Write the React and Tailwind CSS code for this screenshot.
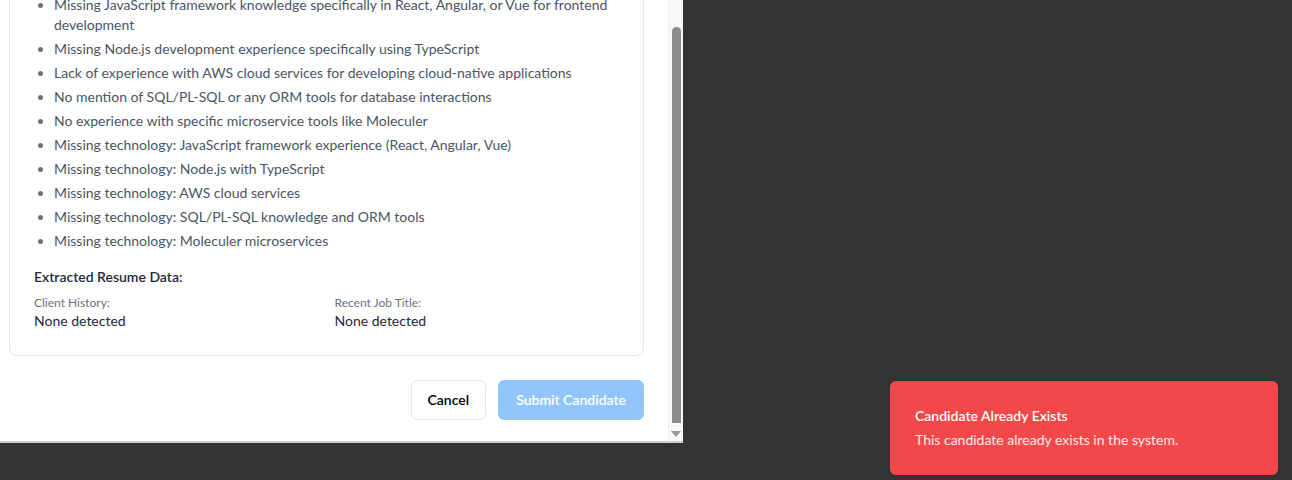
import React from 'react'

const gaps = [
  'Missing JavaScript framework knowledge specifically in React, Angular, or Vue for frontend development',
  'Missing Node.js development experience specifically using TypeScript',
  'Lack of experience with AWS cloud services for developing cloud-native applications',
  'No mention of SQL/PL-SQL or any ORM tools for database interactions',
  'No experience with specific microservice tools like Moleculer',
  'Missing technology: JavaScript framework experience (React, Angular, Vue)',
  'Missing technology: Node.js with TypeScript',
  'Missing technology: AWS cloud services',
  'Missing technology: SQL/PL-SQL knowledge and ORM tools',
  'Missing technology: Moleculer microservices',
]

const Scrollbar = () => (
  <div className="w-[15px] h-full bg-[#f8f8f8] border-l border-[#ededed] flex flex-col items-center">
    <div className="mt-[27px] w-[9px] h-[396px] rounded-t-full rounded-b-[3px] bg-[#8c8c8c]" />
    <div className="mt-[8px] w-0 h-0 border-l-[5px] border-r-[5px] border-t-[6px] border-l-transparent border-r-transparent border-t-[#9a9a9a]" />
  </div>
)

export default function App() {
  return (
    <div
      className="relative w-[1292px] h-[480px] overflow-hidden bg-[#333333]"
      style={{ fontFamily: 'Lato, "Open Sans", sans-serif' }}
    >
      {/* modal, scrolled to the bottom */}
      <div className="w-[683px] h-[443px] bg-white border-b-2 border-[#cfcfcf] flex">
        <div className="flex-1 overflow-hidden pl-[9px] pr-[24px]">
          <div className="-mt-[30px] border border-gray-200 rounded-lg px-6 pt-6 pb-6">
            <ul className="list-disc list-outside pl-5 space-y-1 text-sm leading-5 text-gray-600 marker:text-gray-500">
              {gaps.map((g) => (
                <li key={g}>{g}</li>
              ))}
            </ul>

            <h4 className="mt-4 text-sm leading-5 font-semibold text-gray-800">Extracted Resume Data:</h4>
            <div className="mt-2 grid grid-cols-2 gap-4">
              <div>
                <p className="text-xs leading-4 text-gray-500">Client History:</p>
                <p className="text-sm leading-5 text-gray-800">None detected</p>
              </div>
              <div>
                <p className="text-xs leading-4 text-gray-500">Recent Job Title:</p>
                <p className="text-sm leading-5 text-gray-800">None detected</p>
              </div>
            </div>
          </div>

          <div className="mt-6 flex justify-end gap-3">
            <button className="h-10 px-4 rounded-md border border-gray-200 bg-white text-sm font-semibold text-black">
              Cancel
            </button>
            <button className="h-10 px-[18px] rounded-md bg-[#93c5fd] text-sm font-semibold text-white">
              Submit Candidate
            </button>
          </div>
        </div>
        <Scrollbar />
      </div>

      {/* toast */}
      <div className="absolute right-[14px] bottom-[5px] w-[388px] h-[94px] rounded-md bg-[#f34849] pl-[25px] pr-6 pt-[25px]">
        <p className="text-sm leading-5 font-semibold text-white">Candidate Already Exists</p>
        <p className="mt-1 text-sm leading-5 text-white/90">This candidate already exists in the system.</p>
      </div>
    </div>
  )
}
